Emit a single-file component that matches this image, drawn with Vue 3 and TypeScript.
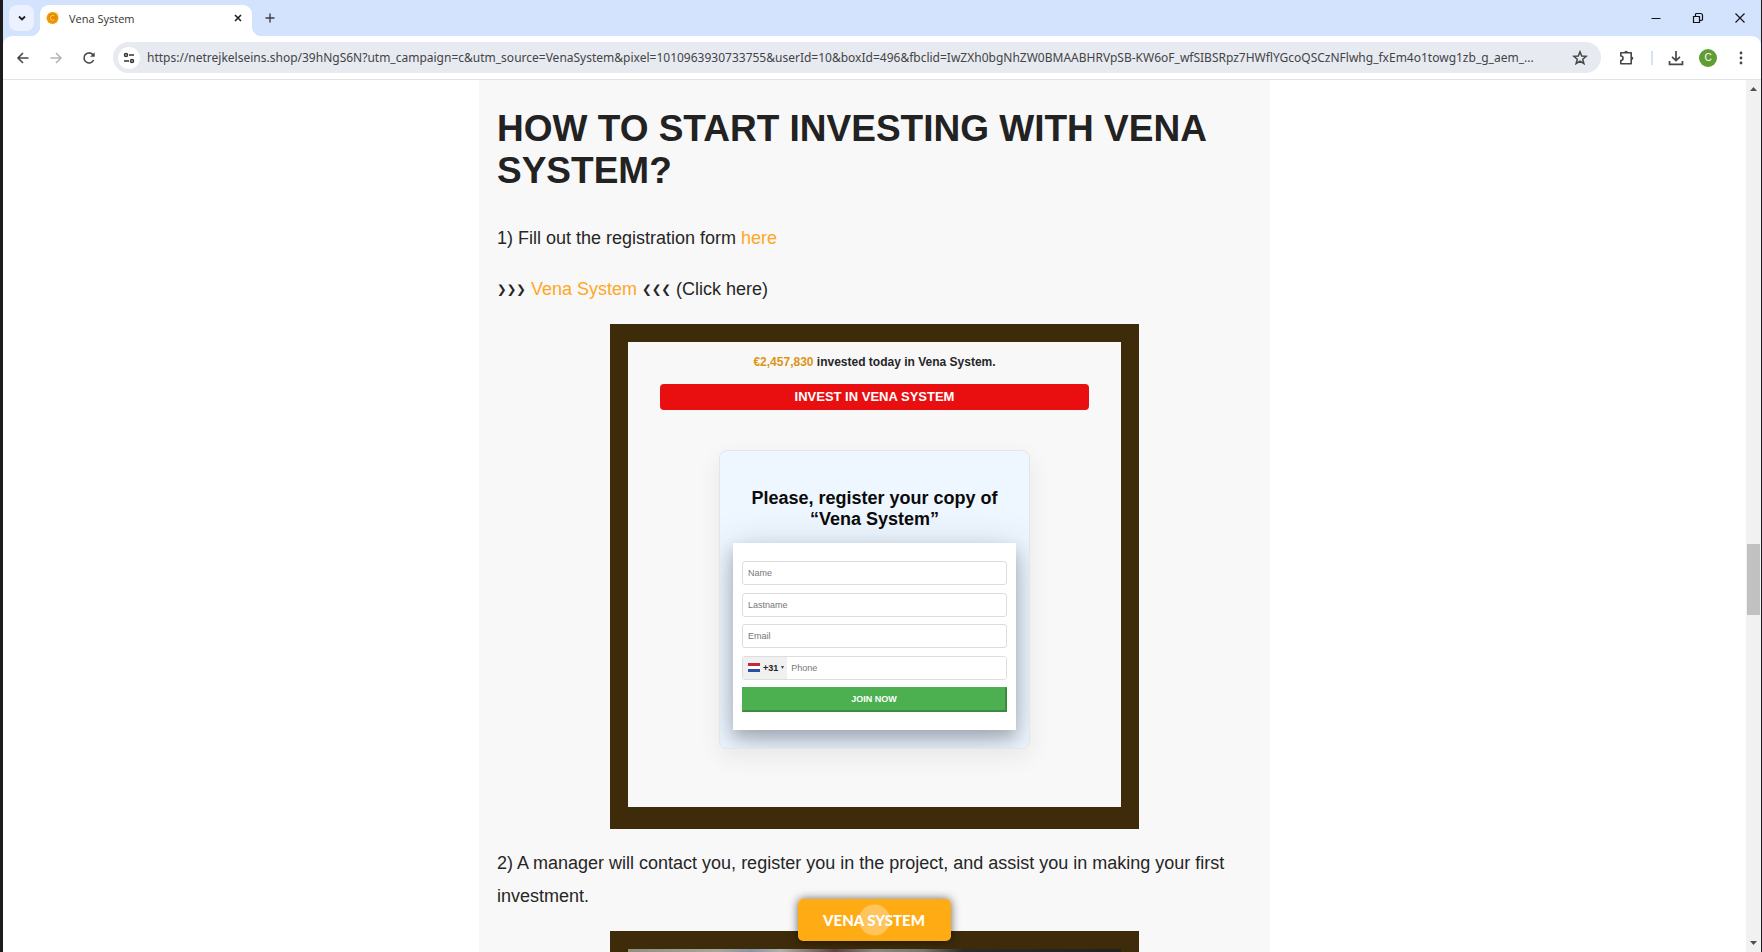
<script setup lang="ts">
import { ref } from 'vue'

interface Field {
  id: string
  label: string
  type: string
}

const url = ref<string>(
  'https://netrejkelseins.shop/39hNgS6N?utm_campaign=c&utm_source=VenaSystem&pixel=1010963930733755&userId=10&boxId=496&fbclid=IwZXh0bgNhZW0BMAABHRVpSB-KW6oF_wfSIBSRpz7HWflYGcoQSCzNFlwhg_fxEm4o1towg1zb_g_aem_...',
)

const fields: Field[] = [
  { id: 'name', label: 'Name', type: 'text' },
  { id: 'lastname', label: 'Lastname', type: 'text' },
  { id: 'email', label: 'Email', type: 'email' },
]
</script>

<template>
  <div class="window">
    <header class="tabstrip">
      <button class="tab-search" type="button" aria-label="Search tabs">
        <svg width="12" height="12" viewBox="0 0 12 12"><path d="M3 4.5 6 7.5 9 4.5" fill="none" stroke="#1f1f1f" stroke-width="1.8" /></svg>
      </button>
      <div class="tab">
        <svg class="favicon" width="14" height="14" viewBox="0 0 14 14">
          <circle cx="6.5" cy="7" r="6" fill="#f29a05" />
          <circle cx="6.8" cy="6.6" r="4" fill="#e08600" />
          <path d="M8.6 5.2A2.4 2.4 0 1 0 8.6 8.4" fill="none" stroke="#ffc23a" stroke-width="1.2" />
          <path d="M9 1.4 12 2.6 12 5" fill="none" stroke="#ffd36a" stroke-width="1" />
        </svg>
        <span class="tab-title">Vena System</span>
        <button class="plain" type="button" aria-label="Close tab">
          <svg width="10" height="10" viewBox="0 0 10 10"><path d="M2 2 8 8M8 2 2 8" fill="none" stroke="#1f1f1f" stroke-width="1.6" /></svg>
        </button>
      </div>
      <button class="plain new-tab" type="button" aria-label="New tab">
        <svg width="12" height="12" viewBox="0 0 12 12"><path d="M6 1.500V10.500M1.500 6H10.500" fill="none" stroke="#3c4043" stroke-width="1.4" /></svg>
      </button>
      <div class="window-controls">
        <button class="plain" type="button" aria-label="Minimize">
          <svg width="12" height="12" viewBox="0 0 12 12"><path d="M1.500 6.500H10.500" stroke="#111" /></svg>
        </button>
        <button class="plain" type="button" aria-label="Restore">
          <svg width="12" height="12" viewBox="0 0 12 12"><path d="M1.500 4.500H7.500V10.500H1.500ZM3.500 4.500V2.500Q3.500 1.500 4.500 1.500H8.500Q10.500 1.500 10.500 3.500V7.500Q10.500 8.500 7.500 8.500" fill="none" stroke="#111" stroke-width="1.200" /></svg>
        </button>
        <button class="plain" type="button" aria-label="Close">
          <svg width="12" height="12" viewBox="0 0 12 12"><path d="M1.500 1.500 10.500 10.500M10.500 1.500 1.500 10.500" stroke="#111" stroke-width="1.100" /></svg>
        </button>
      </div>
    </header>

    <nav class="toolbar" aria-label="Browser toolbar">
      <div class="nav-buttons">
        <button class="plain" type="button" aria-label="Back">
          <svg width="14" height="14" viewBox="0 0 14 14"><path d="M12.500 7H2.500M7 2 2 7 7 12" fill="none" stroke="#474747" stroke-width="1.600" /></svg>
        </button>
        <button class="plain" type="button" aria-label="Forward">
          <svg width="14" height="14" viewBox="0 0 14 14"><path d="M1.500 7H11.500M7 2 12 7 7 12" fill="none" stroke="#b5b5b5" stroke-width="1.600" /></svg>
        </button>
        <button class="plain" type="button" aria-label="Reload">
          <svg width="14" height="14" viewBox="0 0 14 14"><path d="M11.600 9A5 5 0 1 1 10.600 3.400L12 4.800" fill="none" stroke="#474747" stroke-width="1.600" /><path d="M12.700 1.200V5.800H8.100Z" fill="#474747" /></svg>
        </button>
      </div>
      <div class="omnibox">
        <button class="site-info" type="button" aria-label="View site information">
          <svg width="12" height="12" viewBox="0 0 12 12"><g fill="none" stroke="#333" stroke-width="1.500"><circle cx="3" cy="3" r="1.500" /><path d="M6 3H11" /><circle cx="9" cy="9" r="1.500" /><path d="M1 9H6" /></g></svg>
        </button>
        <input v-model="url" class="address" type="text" aria-label="Address bar" spellcheck="false" />
        <button class="plain" type="button" aria-label="Bookmark this page">
          <svg width="16" height="16" viewBox="0 0 16 16"><path d="M8 1.800 9.700 6 14.200 6.300 10.700 9.200 11.900 13.700 8 11.200 4.100 13.700 5.300 9.200 1.800 6.300 6.300 6Z" fill="none" stroke="#474747" stroke-width="1.500" /></svg>
        </button>
      </div>
      <div class="actions">
        <button class="plain" type="button" aria-label="Extensions">
          <svg width="18" height="18" viewBox="0 0 18 18"><path d="M2.800 3.800H13.200V14.700H2.800V11.500A2.200 2.200 0 0 0 2.800 7Z" fill="none" stroke="#474747" stroke-width="1.600" stroke-linejoin="round" /><path d="M6.300 3.500A1.800 1.800 0 0 1 9.900 3.500ZM13.500 7.500A1.800 1.800 0 0 1 13.500 11.100Z" fill="#474747" /></svg>
        </button>
        <span class="divider"></span>
        <button class="plain" type="button" aria-label="Downloads">
          <svg width="16" height="16" viewBox="0 0 16 16"><path d="M8 1V10.500M4 6.800 8 10.600 12 6.800M1.500 11V14.400H14.500V11" fill="none" stroke="#474747" stroke-width="1.700" /></svg>
        </button>
        <button class="avatar" type="button" aria-label="Profile">C</button>
        <button class="plain" type="button" aria-label="Menu">
          <svg width="6" height="16" viewBox="0 0 6 16" fill="#474747"><circle cx="3" cy="3" r="1.400" /><circle cx="3" cy="8" r="1.400" /><circle cx="3" cy="13" r="1.400" /></svg>
        </button>
      </div>
    </nav>

    <div class="viewport">
      <main class="page">
        <article class="article">
          <h1>HOW TO START INVESTING WITH VENA SYSTEM?</h1>
          <p>1) Fill out the registration form <a href="#register">here</a></p>
          <p>
            <span class="arrows">❯❯❯</span> <a href="#register">Vena System</a> <span class="arrows">❮❮❮</span> (Click here)
          </p>

          <section id="register" class="frame">
            <div class="frame-inner">
              <p class="invested"><b>€2,457,830</b> invested today in Vena System.</p>
              <button class="invest" type="button">INVEST IN VENA SYSTEM</button>
              <div class="card">
                <h2>Please, register your copy of “Vena System”</h2>
                <form class="form" @submit.prevent>
                  <input v-for="f in fields" :key="f.id" :type="f.type" :name="f.id" :placeholder="f.label" :aria-label="f.label" class="field" />
                  <div class="phone">
                    <button class="prefix" type="button" aria-label="Country code +31">
                      <svg width="12" height="9" viewBox="0 0 12 9"><path fill="#fff" d="M0 0H12V9H0Z" /><path fill="#c4283a" d="M0 0H12V3H0Z" /><path fill="#2850a4" d="M0 6H12V9H0Z" /></svg>
                      <span>+31</span>
                      <svg width="3" height="3" viewBox="0 0 3 3"><path d="M0 0H3L1.500 3Z" fill="#444" /></svg>
                    </button>
                    <input type="tel" name="phone" placeholder="Phone" aria-label="Phone" />
                  </div>
                  <button class="join" type="submit">JOIN NOW</button>
                </form>
              </div>
            </div>
          </section>

          <p class="step">2) A manager will contact you, register you in the project, and assist you in making your first investment.</p>
          <div class="frame"><div class="photo"></div></div>
        </article>
        <a class="cta" href="#register"><span>VENA SYSTEM</span></a>
      </main>
      <div class="scrollbar">
        <svg width="9" height="18" viewBox="0 0 9 18"><path d="M1 11 4.500 7 8 11Z" fill="#505050" /></svg>
        <span class="before"></span>
        <span class="thumb"></span>
        <span class="after"></span>
        <svg width="9" height="18" viewBox="0 0 9 18"><path d="M1 7 4.500 11 8 7Z" fill="#505050" /></svg>
      </div>
    </div>
  </div>
</template>

<style>
body {
  margin: 0;
  overflow: hidden;
}
</style>

<style scoped>
* {
  box-sizing: border-box;
}
svg {
  display: block;
}
button,
input {
  font-family: inherit;
}
.window {
  display: flex;
  flex-direction: column;
  height: 100vh;
  border-left: 3px solid #1c1c1e;
  border-right: 1px solid #1c1c1e;
  background: #d3e3fd;
  font-family: "Liberation Sans", Arial, sans-serif;
  color: #262626;
}
.plain {
  display: flex;
  align-items: center;
  justify-content: center;
  padding: 0;
  border: 0;
  background: none;
}
.tabstrip {
  display: flex;
  flex: none;
  height: 36px;
  padding: 5px 0 0 6px;
  font-family: "Open Sans", "Noto Sans", sans-serif;
}
.tab-search {
  display: flex;
  align-items: center;
  justify-content: center;
  width: 25px;
  height: 26px;
  margin-right: 6px;
  padding: 0;
  border: 0;
  border-radius: 8px;
  background: #ebf1fe;
}
.tab {
  position: relative;
  display: flex;
  align-items: center;
  width: 212px;
  padding: 0 9px 5px 6px;
  border-radius: 9px 9px 0 0;
  background: #fff;
}
.tab::before,
.tab::after {
  content: "";
  position: absolute;
  bottom: 0;
  width: 9px;
  height: 9px;
}
.tab::before {
  right: 100%;
  background: radial-gradient(circle at 0 0, transparent 9px, #fff 9px);
}
.tab::after {
  left: 100%;
  background: radial-gradient(circle at 100% 0, transparent 9px, #fff 9px);
}
.tab-title {
  flex: 1;
  margin-left: 9px;
  font-size: 11px;
  color: #333;
}
.new-tab {
  height: 26px;
  margin-left: 12px;
}
.window-controls {
  display: flex;
  gap: 30px;
  height: 26px;
  margin-left: auto;
  padding-right: 15px;
}
.toolbar {
  display: flex;
  align-items: center;
  flex: none;
  height: 44px;
  padding: 0 17px 0 13px;
  border-bottom: 1px solid #e0e2e4;
  border-radius: 9px 9px 0 0;
  background: #fff;
}
.nav-buttons {
  display: flex;
  gap: 19px;
  margin-right: 17px;
}
.omnibox {
  display: flex;
  flex: 1;
  align-items: center;
  min-width: 0;
  height: 31px;
  padding: 0 13px 0 5px;
  border-radius: 16px;
  background: #e7eaf1;
}
.site-info {
  display: flex;
  align-items: center;
  justify-content: center;
  width: 22px;
  height: 22px;
  padding: 0;
  border: 0;
  border-radius: 50%;
  background: #fff;
}
.address {
  flex: 1;
  min-width: 0;
  margin: 0 8px 0 7px;
  padding: 0;
  border: 0;
  outline: 0;
  background: none;
  font-family: "Noto Sans", "Open Sans", sans-serif;
  font-size: 12px;
  color: #444;
}
.actions {
  display: flex;
  align-items: center;
  gap: 15px;
  margin-left: 17px;
}
.divider {
  width: 2px;
  height: 14px;
  background: #d3e3fd;
}
.avatar {
  width: 18px;
  height: 18px;
  margin-right: 6px;
  padding: 0;
  border: 0;
  border-radius: 50%;
  background: #5f9e35;
  font-size: 10px;
  line-height: 18px;
  color: #fff;
}
.viewport {
  display: flex;
  flex: 1;
  min-height: 0;
  background: #fff;
}
.page {
  position: relative;
  display: flex;
  flex: 1;
  justify-content: center;
  min-width: 0;
  overflow: hidden;
}
.article {
  flex: 0 1 791px;
  height: max-content;
  padding: 28px 18px;
  background: #f8f8f8;
}
h1 {
  margin: 0 0 30px;
  font-size: 37px;
  line-height: 42px;
  color: #222;
}
.article > p {
  margin: 0 0 18px;
  font-size: 18px;
  line-height: 33px;
}
a {
  color: #ffa726;
  text-decoration: none;
}
.arrows {
  font-family: "DejaVu Sans Mono", monospace;
  font-size: 16px;
  line-height: 18px;
}
.frame {
  max-width: 529px;
  margin: 0 auto 18px;
  padding: 18px 18px 22px;
  background: #3e2b0a;
}
.frame-inner {
  display: flex;
  flex-direction: column;
  align-items: center;
  min-height: 465px;
  padding: 12px 32px 0;
  background: #f8f8f8;
}
.invested {
  margin: 0 0 14px;
  font-size: 12px;
  font-weight: bold;
  line-height: 16px;
}
.invested b {
  color: #dc9414;
}
.invest {
  align-self: stretch;
  height: 26px;
  padding: 0;
  border: 0;
  border-radius: 4px;
  background: #e90f11;
  font-size: 13px;
  font-weight: bold;
  line-height: 24px;
  color: #fff;
}
.card {
  width: 311px;
  margin-top: 40px;
  padding: 37px 13px 18px;
  border: 1px solid #e2e6ea;
  border-radius: 8px;
  background: #eef7ff;
  box-shadow: 0 8px 24px rgba(0, 0, 0, 0.07);
  overflow: hidden;
}
h2 {
  margin: 0 0 13px;
  font-size: 18px;
  line-height: 21px;
  text-align: center;
  color: #0a0a0a;
}
.form {
  display: flex;
  flex-direction: column;
  justify-content: space-between;
  height: 187px;
  padding: 18px 9px;
  background: #fff;
  box-shadow: 0 8px 14px rgba(40, 45, 55, 0.25), 0 8px 36px rgba(40, 50, 70, 0.25);
}
.field,
.phone {
  height: 24px;
  border: 1px solid #ddd;
  border-radius: 3px;
  background: #fff;
}
.field,
.phone input {
  padding: 0 5px;
  font-size: 9px;
  color: #333;
}
::placeholder {
  color: #777;
  opacity: 1;
}
.phone {
  display: flex;
  overflow: hidden;
}
.phone input {
  flex: 1;
  min-width: 0;
  padding: 0 4px;
  border: 0;
}
.prefix {
  display: flex;
  align-items: center;
  gap: 3px;
  padding: 0 3px 0 5px;
  border: 0;
  background: #f0f0f0;
  font-size: 9px;
  font-weight: bold;
  color: #222;
}
.join {
  height: 25px;
  padding: 0;
  border: 1px solid #4caf50;
  border-right: 2px solid #3a8a3f;
  border-bottom: 2px solid #3a8a3f;
  background: #4caf50;
  font-size: 9px;
  font-weight: bold;
  color: #fff;
}
.photo {
  height: 280px;
  background: linear-gradient(90deg, #8f8f84, #a6a69c 18%, #8a94a8 25%, #b0b0ac 31%, #5c4444 42%, #8b8b84 50%, #77776f 60%, #2b2a2c 68%, #222 100%);
}
.cta {
  position: absolute;
  bottom: 11px;
  left: 50%;
  width: 153px;
  margin-left: -77px;
  border-radius: 5px;
  background: radial-gradient(circle, #ffc45c 15px, #ffab14 16px);
  box-shadow: 0 0 10px rgba(0, 0, 0, 0.6);
  font-family: Lato, sans-serif;
  font-size: 15px;
  font-weight: 900;
  line-height: 42px;
  text-align: center;
  color: #fff;
}
.scrollbar {
  display: flex;
  flex: none;
  flex-direction: column;
  align-items: center;
  width: 15px;
  background: #f1f1f1;
}
.before {
  flex: 446;
}
.thumb {
  flex: 71;
  width: 13px;
  background: #c1c1c1;
}
.after {
  flex: 319;
}
</style>
